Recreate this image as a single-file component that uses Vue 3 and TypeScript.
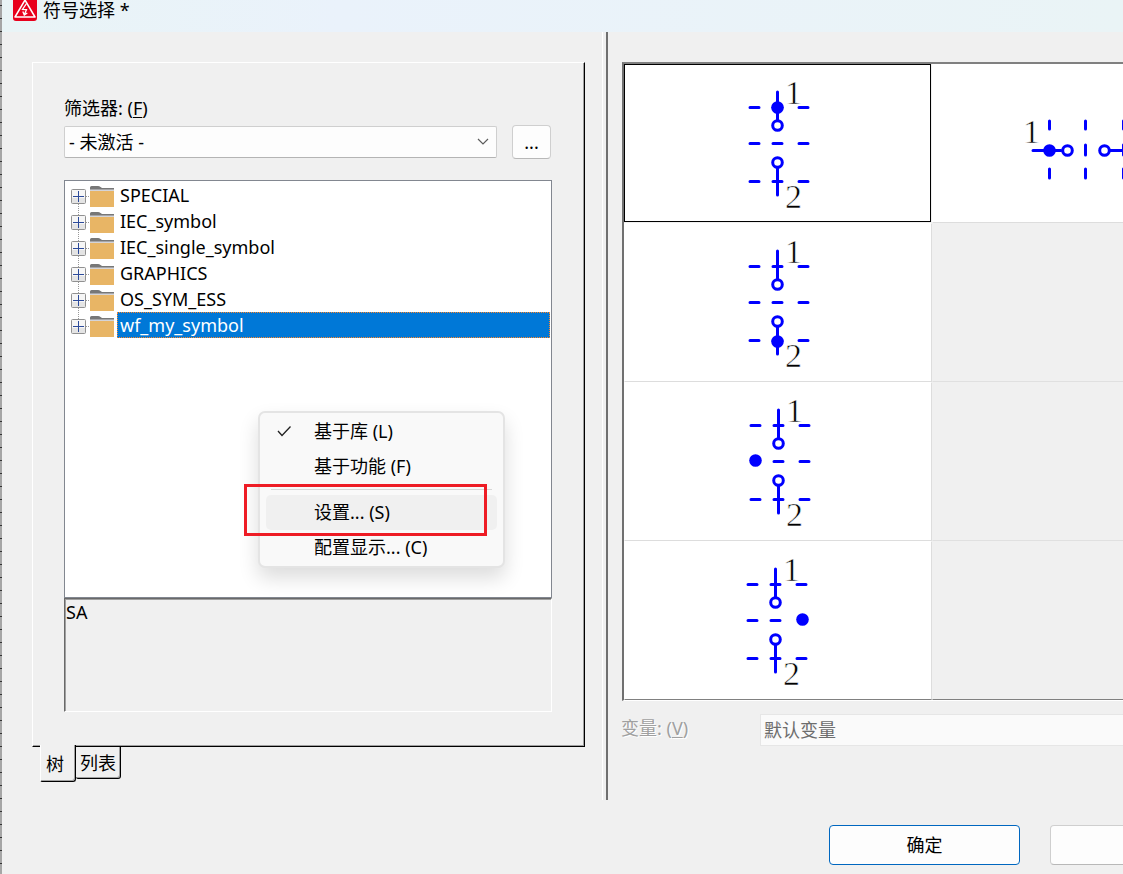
<script setup lang="ts">
import { ref } from 'vue'

interface SymbolVariant {
  id: string
  dx: number
  dy: number
  dot: [number, number]
  hiddenDash: number
}

const libraries: string[] = ['SPECIAL', 'IEC_symbol', 'IEC_single_symbol', 'GRAPHICS', 'OS_SYM_ESS', 'wf_my_symbol']
const selected = ref('wf_my_symbol')
const activeVariant = ref('A')

const variants: SymbolVariant[] = [
  { id: 'A', dx: 0, dy: 0, dot: [153, 43], hiddenDash: -1 },
  { id: 'C', dx: 0, dy: 0, dot: [153, 118], hiddenDash: -1 },
  { id: 'E', dx: 1, dy: 0, dot: [130, 78], hiddenDash: 0 },
  { id: 'G', dx: -2, dy: 0, dot: [180, 78], hiddenDash: 2 },
]

const rows = [43.5, 79.5, 117.5]
const cols = [126, 149, 175]

// The middle row leaves out the dash whose place the solid dot takes.
function dashes(v: SymbolVariant): string {
  return rows
    .flatMap((y, r) => cols.filter((_, c) => !(r === 1 && c === v.hiddenDash)).map((x) => `M${x} ${y}h9`))
    .join('')
}
</script>

<template>
  <div class="dialog">
    <header class="title-bar">
      <svg class="logo" viewBox="0 3 24 21" aria-hidden="true">
        <rect width="24" height="24" rx="3" fill="#e8001c" />
        <path d="M12 3 22 20H2Z" fill="none" stroke="#fff" stroke-width="1.5" stroke-linejoin="round" />
        <path d="M13.5 6.500 9.500 12.500l4 .2-2 4.500M9.800 14.500l1.500 3.500 3-2" fill="none" stroke="#fff" stroke-width="1.300" />
      </svg>
      <h1>符号选择 *</h1>
    </header>

    <main class="content">
      <section class="left-pane">
        <div class="tab-panel">
          <label class="caption" for="filter">筛选器: (<u>F</u>)</label>
          <div class="filter-row">
            <div class="select-wrap">
              <select id="filter">
                <option>- 未激活 -</option>
              </select>
              <svg class="chevron" viewBox="0 0 12 8" aria-hidden="true">
                <path d="M1 1l5 5 5-5" fill="none" stroke="#5c5c5c" stroke-width="1.2" />
              </svg>
            </div>
            <button class="more" type="button">...</button>
          </div>

          <div class="tree">
            <ul>
              <li v-for="name in libraries" :key="name">
                <button class="expander" type="button" :aria-label="name">
                  <svg viewBox="0 0 15 15" aria-hidden="true">
                    <rect x=".5" y=".5" width="14" height="14" rx="1" fill="#f6f6f6" stroke="#919191" />
                    <path d="M1 9h13v5H1z" fill="#e4e4e4" />
                    <path d="M2 7.5h11M7.5 2v11" stroke="#2c4a9a" />
                  </svg>
                </button>
                <svg class="folder" viewBox="0 0 24 21" aria-hidden="true">
                  <path d="M0 4V1.500Q0 0 1.500 0H8q1.500 0 2.500 1L12 2h12v2z" fill="#777" />
                  <path d="M0 3h24v2H0z" fill="#d4d4d8" />
                  <path d="M0 2h24v1.500H0z" fill="#777" />
                  <path d="M0 5h24v16H0z" fill="#e8b565" />
                </svg>
                <button class="node" :class="{ chosen: selected === name }" type="button" @click="selected = name">{{ name }}</button>
              </li>
            </ul>

            <div class="menu" role="menu">
              <button type="button" role="menuitem">
                <svg class="check" viewBox="0 0 14 12" aria-hidden="true">
                  <path d="M1 6l4 4.500L13.500 1.500" fill="none" stroke="#222" stroke-width="1.3" />
                </svg>
                基于库 (L)
              </button>
              <button type="button" role="menuitem">基于功能 (F)</button>
              <hr />
              <button class="hover" type="button" role="menuitem">设置... (S)</button>
              <button type="button" role="menuitem">配置显示... (C)</button>
            </div>
            <div class="marker"></div>
          </div>

          <div class="details">SA</div>
        </div>

        <div class="tabs" role="tablist">
          <button class="tab current" type="button" role="tab" aria-selected="true">树</button>
          <button class="tab" type="button" role="tab" aria-selected="false">列表</button>
        </div>
      </section>

      <section class="right-pane">
        <div class="symbols">
          <template v-for="(v, i) in variants" :key="v.id">
            <button class="cell" :class="{ active: activeVariant === v.id }" type="button" :aria-label="v.id" @click="activeVariant = v.id">
              <svg viewBox="1 1 306 157">
                <g :transform="`translate(${v.dx} ${v.dy})`">
                  <path class="line" :d="dashes(v)" />
                  <path class="line" d="M153.500 28v28M153.500 103v28" />
                  <circle class="ring" cx="153.500" cy="61.500" r="4.800" />
                  <circle class="ring" cx="153.500" cy="98.500" r="4.800" />
                  <circle class="dot" :cx="v.dot[0] + 0.5" :cy="v.dot[1] + 0.5" r="6.300" />
                  <text x="161" y="40">1</text>
                  <text x="161" y="144">2</text>
                </g>
              </svg>
            </button>
            <button v-if="i === 0" class="cell" type="button" aria-label="B">
              <svg viewBox="1 1 306 157">
                <path class="line" d="M101 86.500h28M176 86.500h28" />
                <path class="line" d="M117.500 57v8M117.500 105v9M153.500 57v8M153.500 81v10M153.500 105v9M191.500 57v8M191.500 81v10M191.500 105v9" />
                <circle class="dot" cx="117.500" cy="86.500" r="6.300" />
                <circle class="ring" cx="135.500" cy="86.500" r="4.800" />
                <circle class="ring" cx="172.500" cy="86.500" r="4.800" />
                <text x="91" y="79">1</text>
              </svg>
            </button>
            <div v-else class="cell empty"></div>
          </template>
        </div>
        <div class="variant-row">
          <label for="variant">变量: (<u>V</u>)</label>
          <select id="variant" disabled>
            <option>默认变量</option>
          </select>
        </div>
      </section>
    </main>

    <footer class="actions">
      <button class="primary" type="button">确定</button>
      <button type="button" aria-label="取消"></button>
    </footer>
  </div>
</template>

<style>
body {
  margin: 0;
  background: #f0f0f0;
}
</style>

<style scoped>
.dialog {
  box-sizing: border-box;
  min-height: 100vh;
  padding-left: 2px;
  overflow: hidden;
  background:
    repeating-linear-gradient(#a6a6a6 0 5px, #333 5px 6px, #a6a6a6 6px 13px) 0 0 / 2px 100% no-repeat,
    #f0f0f0;
  color: #000;
  font: 18px/24px "Noto Sans", "Noto Sans CJK SC", sans-serif;
}
.dialog *,
.dialog *::before {
  box-sizing: border-box;
}
button,
select {
  margin: 0;
  padding: 0;
  font: inherit;
  color: inherit;
}
svg {
  display: block;
}
u {
  text-underline-offset: 2px;
  text-decoration-thickness: 1px;
}
.title-bar {
  display: flex;
  gap: 6px;
  height: 32px;
  padding-left: 11px;
  background: linear-gradient(90deg, #e9f4f6, #eaf2fb 30%, #eaf4f6);
}
.logo {
  width: 24px;
  height: 21px;
}
h1 {
  margin: 0;
  font-size: 18px;
  font-weight: 400;
  line-height: 20px;
}
.content {
  display: flex;
}
.left-pane {
  flex: 0 0 606px;
  padding: 30px 21px 18px 30px;
  border-right: 2px solid #707070;
  box-shadow: inset -3px 0 #f0f0f0, inset -4px 0 #fff;
}
.tab-panel {
  padding: 33px 32px 34px 31px;
  border: 1px solid;
  border-color: #fff #000 #000 #fff;
  box-shadow: inset -1px -1px #a0a0a0;
}
.caption {
  display: block;
  padding-bottom: 5px;
}
.filter-row {
  display: flex;
  align-items: center;
  gap: 15px;
  margin-bottom: 21px;
  padding-right: 1px;
}
.select-wrap {
  display: grid;
  flex: 1;
  align-items: center;
}
.select-wrap > * {
  grid-area: 1 / 1;
}
#filter {
  width: 100%;
  height: 32px;
  padding-left: 4px;
  border: 1px solid #cfcfcf;
  border-bottom-color: #b4b4b4;
  border-radius: 2px;
  background: #fdfdfd;
  appearance: none;
}
.chevron {
  justify-self: end;
  width: 12px;
  height: 8px;
  margin-right: 8px;
  pointer-events: none;
}
.more {
  width: 39px;
  height: 34px;
  border: 1px solid #cfcfcf;
  border-bottom-color: #b8b8b8;
  border-radius: 4px;
  background: #fdfdfd;
}
.tree {
  position: relative;
  height: 418px;
  padding: 1px;
  border: 1px solid #828790;
  background: #fff;
}
ul {
  margin: 0;
  padding: 0;
  list-style: none;
}
li {
  display: flex;
  align-items: center;
  height: 26px;
  padding-left: 5px;
  background:
    repeating-linear-gradient(90deg, #999 0 1px, transparent 1px 2px) 20px 14px / 6px 1px no-repeat,
    repeating-linear-gradient(#999 0 1px, transparent 1px 2px) 12px 0 / 1px 100% no-repeat;
}
li:first-child {
  background-position: 20px 14px, 12px 14px;
}
li:last-child {
  background-size: 6px 1px, 1px 14px;
}
.expander {
  width: 15px;
  height: 15px;
  margin-top: 3px;
  border: 0;
  background: none;
}
.folder {
  width: 24px;
  height: 21px;
  margin: 3px 3px 0 4px;
}
.node {
  flex: 1;
  height: 26px;
  padding: 0 2px;
  border: 1px solid #fff;
  background: #fff;
  line-height: 24px;
  text-align: left;
}
.node.chosen {
  border: 1px dotted #ff8728;
  background: #0078d7;
  color: #fff;
}
.menu {
  position: absolute;
  top: 230px;
  left: 193px;
  width: 247px;
  padding: 1px 6px;
  border: 2px solid #e4e4e4;
  border-radius: 7px;
  background: #f9f9f9;
  box-shadow: 0 10px 20px rgb(0 0 0 / 14%);
}
.menu button {
  display: block;
  position: relative;
  width: 100%;
  height: 35px;
  padding: 0 0 2px 48px;
  border: 0;
  border-radius: 5px;
  background: none;
  text-align: left;
}
.menu .hover {
  background: #f0f0f0;
}
.check {
  position: absolute;
  top: 11px;
  left: 11px;
  width: 14px;
  height: 12px;
}
hr {
  height: 1px;
  margin: 5px;
  border: 0;
  background: #d7d7d7;
}
.marker {
  position: absolute;
  top: 303px;
  left: 179px;
  width: 243px;
  height: 52px;
  border: 3px solid #ee1c25;
  pointer-events: none;
}
.details {
  height: 114px;
  padding: 1px;
  border: 1px solid;
  border-color: #696969 #fff #fff #696969;
  box-shadow: inset 1px 1px #a0a0a0;
}
.tabs {
  display: flex;
  align-items: flex-start;
  margin: -2px 0 0 8px;
}
.tab {
  height: 33px;
  padding: 0 4px;
  border: 1px solid #000;
  border-left: 0;
  border-radius: 0 0 3px 2px;
  background: #f0f0f0;
  box-shadow: inset -1px -1px #a0a0a0;
}
.tab.current {
  height: 37px;
  padding: 2px 11px 0 5px;
  border-top: 0;
  border-left: 1px solid #fff;
}
.tab:not(.current) {
  margin-top: 1px;
}
.right-pane {
  flex: 1;
  min-width: 0;
  padding: 30px 0 0 14px;
}
.symbols {
  display: grid;
  grid-template-columns: 308px 308px;
  overflow: hidden;
  border: 2px solid #707070;
  border-top-color: #808080;
  border-right: 0;
  border-bottom: 1px solid #fff;
}
.cell {
  display: block;
  height: 159px;
  border: 1px solid #fff;
  border-right-color: #ddd;
  border-bottom-color: #ddd;
  background: #fff;
}
.cell svg {
  width: 306px;
  height: 157px;
}
.cell.active {
  height: 158px;
  margin: 0 1px 1px 0;
  border-color: #000;
}
.cell.active svg {
  margin-bottom: -1px;
}
.cell.empty {
  border-color: #f0f0f0;
  border-bottom-color: #e0e0e0;
  background: #f0f0f0;
}
.cell:nth-last-child(-n + 2) {
  border-bottom-color: #808080;
}
.line {
  fill: none;
  stroke: #00f;
  stroke-width: 3;
  stroke-linecap: round;
}
.ring {
  fill: #fff;
  stroke: #00f;
  stroke-width: 3;
}
.dot {
  fill: #00f;
}
.cell text {
  font: 34px "Liberation Serif", serif;
  stroke: #fff;
  stroke-width: 0.6px;
}
.variant-row {
  display: flex;
  align-items: center;
  margin: 13px 0 0 -1px;
  color: #a0a0a0;
  text-shadow: 1px 1px #fff;
}
.variant-row label {
  flex: 0 0 139px;
  padding-bottom: 4px;
}
.variant-row select {
  flex: 1;
  min-width: 0;
  height: 32px;
  padding-left: 3px;
  border: 1px solid #e6e6e6;
  border-right: 0;
  background: #fafafa;
  color: #6d6d6d;
  opacity: 1;
  appearance: none;
}
.actions {
  display: flex;
  gap: 30px;
  padding: 25px 0 9px 827px;
}
.actions button {
  flex: 0 0 191px;
  height: 40px;
  border: 1px solid #cfcfcf;
  border-bottom-color: #b8b8b8;
  border-radius: 4px;
  background: #fdfdfd;
}
.actions .primary {
  border-color: #0067c0;
}
</style>
